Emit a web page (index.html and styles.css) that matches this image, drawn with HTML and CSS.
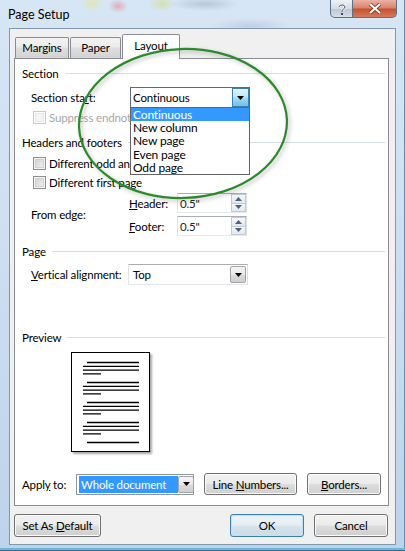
FILE: index.html
```html
<!DOCTYPE html>
<html>
<head>
<meta charset="utf-8">
<title>Page Setup</title>
<link rel="stylesheet" href="styles.css">
</head>
<body>
<div class="window">
  <div class="titlebar">
    <span class="title">Page Setup</span>
    <div class="caption-btns">
      <div class="cbtn help">
        <svg width="10" height="12" viewBox="0 0 10 12"><path d="M2 4 C2 1.5 8 1.2 8 4 C8 6 5 6 5 8 L5 9" fill="none" stroke="#fff" stroke-width="2.2"/><path d="M2 4 C2 1.5 8 1.2 8 4 C8 6 5 6 5 8 L5 9" fill="none" stroke="#3a4a5c" stroke-width="1"/><rect x="4" y="10" width="2" height="2" fill="#3a4a5c"/></svg>
      </div>
      <div class="cbtn close">
        <svg width="14" height="11" viewBox="0 0 14 11"><path d="M2 1 L12 10 M12 1 L2 10" stroke="#7a2a1a" stroke-width="3.6"/><path d="M2 1 L12 10 M12 1 L2 10" stroke="#fff" stroke-width="2.2"/></svg>
      </div>
    </div>
  </div>
  <div class="client">
    <div class="tabs">
      <div class="tab t-margins">Margins</div>
      <div class="tab t-paper">Paper</div>
      <div class="tab t-layout active">Layout</div>
    </div>
    <div class="panel">
      <div class="group-h g-section"><span>Section</span><i></i></div>
      <div class="row r-start indent">
        <span class="lbl w-start">Section sta<u>r</u>t:</span>
        <div class="combo focused w-start-combo">
          <span class="val">Continuous</span>
          <span class="dd hot"><svg width="7" height="4" viewBox="0 0 7 4"><path d="M0 0 H7 L3.5 4 Z" fill="#000"/></svg></span>
          <ul class="droplist">
            <li class="sel">Continuous</li>
            <li>New column</li>
            <li>New page</li>
            <li>Even page</li>
            <li>Odd page</li>
          </ul>
        </div>
      </div>
      <div class="row r-suppress chk-row disabled">
        <span class="chk"></span><span>Suppress endnotes</span>
      </div>
      <div class="group-h g-hf"><span>Headers and footers</span><i></i></div>
      <div class="row r-odd chk-row">
        <span class="chk"></span><span>Different odd and even pages</span>
      </div>
      <div class="row r-first chk-row">
        <span class="chk"></span><span>Different first page</span>
      </div>
      <div class="row r-edge indent">
        <span class="lbl w-edge">From edge:</span>
        <div class="edge-col">
          <div class="edge-row">
            <span class="lbl w-hf"><u>H</u>eader:</span>
            <div class="spin"><span class="val">0.5"</span>
              <span class="spin-btns">
                <span class="sb"><svg width="7" height="4" viewBox="0 0 7 4"><path d="M0 4 H7 L3.5 0 Z" fill="#4d6185"/></svg></span>
                <span class="sb"><svg width="7" height="4" viewBox="0 0 7 4"><path d="M0 0 H7 L3.5 4 Z" fill="#4d6185"/></svg></span>
              </span>
            </div>
          </div>
          <div class="edge-row">
            <span class="lbl w-hf"><u>F</u>ooter:</span>
            <div class="spin"><span class="val">0.5"</span>
              <span class="spin-btns">
                <span class="sb"><svg width="7" height="4" viewBox="0 0 7 4"><path d="M0 4 H7 L3.5 0 Z" fill="#4d6185"/></svg></span>
                <span class="sb"><svg width="7" height="4" viewBox="0 0 7 4"><path d="M0 0 H7 L3.5 4 Z" fill="#4d6185"/></svg></span>
              </span>
            </div>
          </div>
        </div>
      </div>
      <div class="group-h g-page"><span>Page</span><i></i></div>
      <div class="row r-vert indent">
        <span class="lbl w-vert"><u>V</u>ertical alignment:</span>
        <div class="combo w-vert-combo">
          <span class="val">Top</span>
          <span class="dd"><svg width="7" height="4" viewBox="0 0 7 4"><path d="M0 0 H7 L3.5 4 Z" fill="#000"/></svg></span>
        </div>
      </div>
      <div class="group-h g-preview"><span>Preview</span><i></i></div>
      <div class="preview-page">
        <svg width="77" height="98" viewBox="0 0 77 98">
          <g stroke="#000" stroke-width="1.3">
            <path d="M15 9.5 H67 M11 13.3 H67 M11 17.1 H67 M11 20.8 H29"/>
            <path d="M15 29.5 H67 M11 33.3 H67 M11 37.1 H67 M11 40.8 H29"/>
            <path d="M15 49.5 H67 M11 53.3 H67 M11 57.1 H67 M11 60.8 H29"/>
            <path d="M15 69.5 H67 M11 73.3 H67 M11 77.1 H67 M11 80.8 H29"/>
            <path d="M15 89.5 H67"/>
          </g>
        </svg>
      </div>
      <div class="row r-apply">
        <span class="lbl w-apply">Appl<u>y</u> to:</span>
        <div class="combo w-apply-combo">
          <span class="val hl">Whole document</span>
          <span class="dd"><svg width="7" height="4" viewBox="0 0 7 4"><path d="M0 0 H7 L3.5 4 Z" fill="#000"/></svg></span>
        </div>
        <div class="btn b-line"><span>Line <u>N</u>umbers...</span></div>
        <div class="btn b-borders"><span><u>B</u>orders...</span></div>
      </div>
    </div>
    <div class="bottom-row">
      <div class="btn b-default"><span>Set As <u>D</u>efault</span></div>
      <div class="btn b-ok default"><span>OK</span></div>
      <div class="btn b-cancel"><span>Cancel</span></div>
    </div>
  </div>
  <svg class="annot" width="405" height="551" viewBox="0 0 405 551">
    <ellipse cx="183" cy="123.5" rx="104" ry="74.5" fill="none" stroke="#2c8a2c" stroke-width="2.2" transform="rotate(-2 183 123.5)"/>
  </svg>
</div>
</body>
</html>
```
FILE: styles.css
```css
* { box-sizing: border-box; }
html, body { margin: 0; padding: 0; }
body {
  width: 405px;
  height: 551px;
  overflow: hidden;
  font-family: Lato, "Noto Sans", "Liberation Sans", sans-serif;
  font-size: 11.5px;
  letter-spacing: -0.15px;
  color: #000;
  background:
    radial-gradient(ellipse 12px 7px at 92px 4px, rgba(230, 230, 150, .7), rgba(230,230,150,0)),
    radial-gradient(ellipse 10px 7px at 118px 6px, rgba(230, 150, 160, .7), rgba(230,150,160,0)),
    radial-gradient(ellipse 14px 7px at 162px 4px, rgba(210, 220, 130, .6), rgba(210,220,130,0)),
    radial-gradient(ellipse 35px 7px at 205px 4px, rgba(150, 160, 180, .45), rgba(150,160,180,0)),
    radial-gradient(ellipse 40px 8px at 250px 26px, rgba(150, 170, 200, .35), rgba(150,170,200,0)),
    linear-gradient(#d7e6f5, #c9dcef 60%, #bcd3ea);
}
.window {
  position: relative;
  width: 405px;
  height: 551px;
  box-shadow: inset 0 -1px 0 #2f6f92, inset 0 -3px 0 #6fb6d6, inset -1px 0 0 #6f8aa6;
}
.titlebar {
  height: 28px;
  display: flex;
  align-items: flex-start;
  padding-left: 8px;
}
.title { line-height: 29px; font-size: 12.5px; color: #000; letter-spacing: 0; }
.caption-btns { margin-left: auto; margin-right: 8px; display: flex; }
.cbtn {
  height: 18px;
  border: 1px solid #5f7185;
  border-top: none;
  display: flex;
  align-items: center;
  justify-content: center;
}
.help {
  width: 23px;
  border-radius: 0 0 0 5px;
  background: linear-gradient(#eef2f6, #d3dbe4 50%, #bcc7d3 52%, #d6dee7);
}
.close {
  width: 44px;
  border-left: none;
  border-radius: 0 0 5px 0;
  background: linear-gradient(#eab2a4, #d9826d 48%, #c6502f 52%, #d57a5c);
}

.client {
  margin-left: 9px;
  width: 387px;
  height: 517px;
  background: #f0f0f0;
  border: 1px solid #8396ad;
  padding: 5px 6px 0 4px;
}

.tabs {
  display: flex;
  align-items: flex-end;
  gap: 1px;
  height: 24px;
  padding-left: 1px;
  position: relative;
  z-index: 2;
}
.tab {
  height: 21px;
  border: 1px solid #898c95;
  border-bottom: none;
  border-radius: 2px 2px 0 0;
  background: linear-gradient(#f3f3f3, #ebebeb 45%, #dedede 50%, #d3d3d3);
  text-align: center;
  line-height: 20px;
}
.t-margins { width: 54px; }
.t-paper { width: 51px; }
.t-layout { width: 58px; }
.tab.active {
  height: 25px;
  margin-bottom: -1px;
  background: #fff;
  line-height: 22px;
}

.panel {
  width: 375px;
  background: #fff;
  border: 1px solid #898c95;
  padding: 0 3px 10px 7px;
}

.group-h {
  display: flex;
  align-items: center;
  height: 15px;
}
.group-h i {
  flex: 1;
  height: 1px;
  background: #d5dfe5;
  margin-left: 6px;
}
.g-section { margin-top: 7px; }
.g-hf { margin-top: 11px; }
.g-page { margin-top: 8px; }
.g-preview { margin-top: 45px; }

.row { display: flex; align-items: center; }
.indent { padding-left: 9px; }
.lbl { flex: none; white-space: nowrap; }
.w-start { width: 99px; }
.w-edge { width: 98px; }
.w-hf { width: 48px; }
.w-vert { width: 97px; }
.w-apply { width: 54px; }

.r-start { margin-top: 6px; height: 21px; position: relative; z-index: 3; }
.r-suppress { margin-top: 3px; }
.r-odd { margin-top: 7px; }
.r-first { margin-top: 6px; }
.r-edge { margin-top: 4px; height: 43px; }
.r-vert { margin-top: 5px; height: 21px; }
.r-apply { margin-top: 21px; height: 22px; }

.chk-row { height: 13px; padding-left: 11px; white-space: nowrap; }
.chk {
  flex: none;
  width: 13px;
  height: 13px;
  margin-right: 3px;
  border: 1px solid #8e8f8f;
  background: linear-gradient(135deg, #cbcbcb, #f7f7f7);
  box-shadow: inset 0 0 0 1px #f4f4f4, inset 0 0 0 2px #d0d0d0;
}
.disabled { color: #a6a6a6; }
.disabled .chk {
  border-color: #c9c9c9;
  background: #f4f4f4;
  box-shadow: inset 0 0 0 1px #fff, inset 0 0 0 2px #e6e6e6;
}

.combo {
  position: relative;
  height: 21px;
  border: 1px solid #abadb3;
  border-right-color: #dbdfe6;
  border-bottom-color: #e3e9ef;
  border-left-color: #e2e3ea;
  background: #fff;
  display: flex;
  align-items: center;
  padding-left: 2px;
}
.combo .val { flex: 1; white-space: nowrap; }
.combo.focused { border-color: #5e6b78; }
.w-start-combo { width: 120px; }
.w-vert-combo { width: 120px; padding-left: 4px; }
.w-apply-combo { width: 118px; border-color: #8d96a3; }

.dd {
  flex: none;
  width: 16px;
  height: 17px;
  margin-right: 1px;
  border: 1px solid #a4a4a4;
  border-radius: 2px;
  background: linear-gradient(#f5f5f5, #e8e8e8 50%, #dadada 52%, #cfcfcf);
  display: flex;
  align-items: center;
  justify-content: center;
}
.dd.hot {
  width: 17px;
  height: 19px;
  margin-right: 0;
  border-color: #3c7fb1;
  border-radius: 0;
  background: linear-gradient(#e3f4fc, #bde6fd 48%, #a7d9f5 52%, #72bfe6);
}

.droplist {
  position: absolute;
  left: -1px;
  top: 19px;
  width: 120px;
  margin: 0;
  padding: 0;
  list-style: none;
  background: #fff;
  border: 1px solid #646464;
}
.droplist li {
  height: 13.2px;
  line-height: 13px;
  padding-left: 2px;
  font-size: 12px;
}
.droplist li.sel { background: #3399ff; color: #fff; }

.val.hl {
  flex: none;
  width: 99px;
  height: 17px;
  line-height: 17px;
  padding-left: 2px;
  background: #3399ff;
  color: #fff;
  margin-right: auto;
}

.edge-col { display: flex; flex-direction: column; gap: 3px; }
.edge-row { display: flex; align-items: center; height: 20px; }
.spin {
  width: 70px;
  height: 20px;
  border: 1px solid #abadb3;
  border-right-color: #dbdfe6;
  border-bottom-color: #e3e9ef;
  border-left-color: #e2e3ea;
  background: #fff;
  display: flex;
  align-items: center;
  padding-left: 2px;
  color: #222;
}
.spin .val { flex: 1; }
.spin-btns {
  flex: none;
  width: 15px;
  height: 18px;
  display: flex;
  flex-direction: column;
}
.sb {
  flex: 1;
  border: 1px solid #c3cad3;
  background: linear-gradient(#f6f8fa, #e3e8ee);
  display: flex;
  align-items: center;
  justify-content: center;
}
.sb + .sb { border-top: none; }

.preview-page {
  margin-top: 7px;
  margin-left: 49px;
  width: 79px;
  height: 100px;
  border: 1px solid #000;
  background: #fff;
  box-shadow: 2px 2px 2px rgba(0, 0, 0, .35);
}
.preview-page svg { display: block; }

.btn {
  flex: none;
  height: 23px;
  border: 1px solid #707070;
  border-radius: 3px;
  background: linear-gradient(#f2f2f2, #ebebeb 48%, #dddddd 52%, #cfcfcf);
  box-shadow: inset 0 0 0 1px #fbfbfb;
  display: flex;
  align-items: center;
  justify-content: center;
  white-space: nowrap;
}
.b-line { width: 93px; margin-left: 10px; }
.b-borders { width: 74px; margin-left: 10px; }
.r-apply .btn { height: 22px; }

.bottom-row {
  display: flex;
  margin-top: 8px;
  height: 23px;
}
.b-default { width: 87px; }
.b-ok { width: 74px; margin-left: auto; }
.b-cancel { width: 74px; margin-left: 10px; margin-right: 1px; }
.btn.default {
  border-color: #3c7fb1;
  background: linear-gradient(#eef4f8, #e6eef4 48%, #d8e4ec 52%, #cbd9e4);
  box-shadow: inset 0 0 0 1px #b9e3f6, inset 0 0 2px 1px #cdeefb;
}

.annot {
  position: absolute;
  left: 0;
  top: 0;
  z-index: 10;
  pointer-events: none;
  filter: drop-shadow(2px 2px 2px rgba(60, 60, 60, .35));
}
```
